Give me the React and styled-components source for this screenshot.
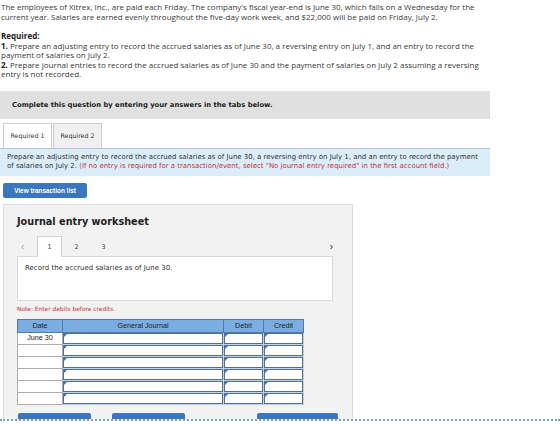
import React, { useState } from 'react';
import styled, { createGlobalStyle } from 'styled-components';

const GlobalStyle = createGlobalStyle`
  html, body {
    margin: 0;
    padding: 0;
    background: #fff;
  }
  body {
    font-family: 'Open Sans', 'Liberation Sans', sans-serif;
    color: #333;
    overflow: hidden;
  }
`;

const Page = styled.div`
  width: 560px;
  padding: 2px 0 0 1px;
  box-sizing: border-box;
`;

const Intro = styled.p`
  margin: 0;
  font-size: 8px;
  line-height: 10px;
  color: #3a3a3a;
  white-space: nowrap;
`;

const Required = styled.div`
  margin-top: 9px;
  font-size: 8px;
  line-height: 9.6px;
  color: #3a3a3a;
  white-space: nowrap;

  b {
    color: #222;
  }
`;

const Banner = styled.div`
  margin: 12px 0 0 -1px;
  width: 490px;
  height: 28px;
  background: #e0e0e0;
  display: flex;
  align-items: center;
  padding-left: 12px;
  box-sizing: border-box;
  font-family: 'DejaVu Sans', Verdana, sans-serif;
  font-weight: bold;
  font-size: 6.8px;
  color: #222;
`;

const TabRow = styled.div`
  display: flex;
  margin: 4px 0 0 2px;
  height: 25px;
`;

const Tab = styled.div`
  width: 49px;
  box-sizing: border-box;
  display: flex;
  align-items: center;
  justify-content: center;
  border: 1px solid #cfcfcf;
  border-bottom: none;
  background: ${(p) => (p.$active ? '#fff' : '#f0f0f0')};
  font-family: 'DejaVu Sans', Verdana, sans-serif;
  font-size: 6.3px;
  color: #333;
  & + & {
    margin-left: 1px;
  }
`;

const Info = styled.div`
  margin-left: -1px;
  width: 490px;
  height: 28px;
  box-sizing: border-box;
  background: #dcedfa;
  border-top: 1px solid #b8c4cf;
  padding: 4px 7px 0;
  font-family: 'DejaVu Sans', Verdana, sans-serif;
  font-size: 6.95px;
  line-height: 9px;
  color: #333;
  white-space: nowrap;

  span {
    color: #c4343a;
  }
`;

const BlueButton = styled.button`
  display: flex;
  flex-shrink: 0;
  align-items: center;
  justify-content: center;
  border: none;
  border-radius: 2px;
  background: #3b77bf;
  color: #fff;
  font-family: 'Liberation Sans', Arial, sans-serif;
  font-weight: bold;
  font-size: 6.4px;
  padding: 0;
  width: ${(p) => p.$w}px;
  height: ${(p) => p.$h || 16}px;
`;

const ListButton = styled(BlueButton)`
  margin: 7px 0 0 2px;
`;

const Worksheet = styled.div`
  margin: 6px 0 0 2px;
  width: 350px;
  height: 260px;
  box-sizing: border-box;
  background: #f2f2f2;
  border: 1px solid #dcdcdc;
  padding: 0 19px 0 13px;
`;

const Title = styled.h3`
  margin: 10px 0 0;
  font-family: 'DejaVu Sans', Verdana, sans-serif;
  font-size: 9.7px;
  line-height: 13px;
  color: #222;
`;

const Steps = styled.div`
  display: flex;
  align-items: stretch;
  height: 21px;
  margin-top: 7px;
`;

const Arrow = styled.div`
  width: 20px;
  display: flex;
  align-items: center;
  justify-content: ${(p) => (p.$right ? 'flex-end' : 'flex-start')};
  padding-left: ${(p) => (p.$right ? '0' : '4px')};
  box-sizing: border-box;
  margin-left: ${(p) => (p.$right ? 'auto' : '0')};
  color: ${(p) => (p.$muted ? '#aaa' : '#333')};
  font-size: 11px;
`;

const Step = styled.div`
  width: 25px;
  box-sizing: border-box;
  display: flex;
  align-items: center;
  justify-content: center;
  font-family: 'DejaVu Sans', Verdana, sans-serif;
  font-size: 6.4px;
  color: #444;
  background: ${(p) => (p.$active ? '#fff' : 'transparent')};
  border: 1px solid ${(p) => (p.$active ? '#d2d2d2' : 'transparent')};
  border-bottom: none;
  margin-right: 2px;
  position: relative;
  top: 1px;
`;

const Prompt = styled.div`
  height: 45px;
  box-sizing: border-box;
  background: #fff;
  border: 1px solid #d8d8d8;
  padding: 7px 7px;
  font-family: 'DejaVu Sans', Verdana, sans-serif;
  font-size: 7px;
  color: #333;
`;

const Note = styled.div`
  margin-top: 4px;
  font-family: 'DejaVu Sans', Verdana, sans-serif;
  font-size: 5.9px;
  line-height: 8px;
  color: #c4343a;
`;

const Table = styled.table`
  margin-top: 6px;
  width: 287px;
  table-layout: fixed;
  border-collapse: collapse;
  font-family: 'Liberation Sans', Arial, sans-serif;
  font-size: 7.2px;
  color: #222;

  tbody tr {
    height: 12px;
  }
  thead tr {
    height: 13px;
  }
`;

const Head = styled.th`
  padding: 0;
  background: #7aaee3;
  border: 1px solid #56779f;
  font-weight: normal;
  text-align: center;
  line-height: 11px;
`;

const DateCell = styled.td`
  padding: 0;
  background: #fff;
  border: 1px solid #acacac;
  text-align: center;
  line-height: 10px;
`;

const EntryCell = styled.td`
  padding: 0;
  border: 1px solid #c6d3e4;
`;

const Entry = styled.div`
  height: 9px;
  background: #fff;
  border: 1px solid #4f6f99;
  position: relative;

  &::before {
    content: '';
    position: absolute;
    left: 0;
    top: 0;
    border-top: 3px solid #3d74c4;
    border-right: 3px solid transparent;
  }
`;

const Actions = styled.div`
  display: flex;
  margin-top: 8px;
  margin-left: 1px;
`;

const ActionButton = styled(BlueButton)`
  margin-left: ${(p) => p.$gap}px;
  border-radius: 2px 2px 0 0;
`;

const Fold = styled.div`
  position: fixed;
  left: 0;
  right: 0;
  top: 419px;
  bottom: 0;
  background: #fff;
  border-top: 2px dotted #7f9dc6;
`;

const columns = [
  { label: 'Date', w: 45 },
  { label: 'General Journal', w: 161 },
  { label: 'Debit', w: 40 },
  { label: 'Credit', w: 40 },
];

const rows = ['June 30', '', '', '', '', ''];

export default function App() {
  const [tab, setTab] = useState(1);
  const [step, setStep] = useState(1);

  return (
    <>
      <GlobalStyle />
      <Page>
        <Intro>
          The employees of Xitrex, Inc., are paid each Friday. The company's fiscal year-end is June 30, which falls
          on a Wednesday for the
          <br />
          current year. Salaries are earned evenly throughout the five-day work week, and $22,000 will be paid on
          Friday, July 2.
        </Intro>
        <Required>
          <b>Required:</b>
          <br />
          <b>1.</b> Prepare an adjusting entry to record the accrued salaries as of June 30, a reversing entry on July
          1, and an entry to record the
          <br />
          payment of salaries on July 2.
          <br />
          <b>2.</b> Prepare journal entries to record the accrued salaries as of June 30 and the payment of salaries
          on July 2 assuming a reversing
          <br />
          entry is not recorded.
        </Required>

        <Banner>Complete this question by entering your answers in the tabs below.</Banner>

        <TabRow>
          {[1, 2].map((n) => (
            <Tab key={n} $active={tab === n} onClick={() => setTab(n)}>
              Required {n}
            </Tab>
          ))}
        </TabRow>
        <Info>
          Prepare an adjusting entry to record the accrued salaries as of June 30, a reversing entry on July 1, and
          an entry to record the payment
          <br />
          of salaries on July 2.{' '}
          <span>
            (If no entry is required for a transaction/event, select "No journal entry required" in the first account
            field.)
          </span>
        </Info>

        <ListButton $w={84} $h={15}>View transaction list</ListButton>

        <Worksheet>
          <Title>Journal entry worksheet</Title>
          <Steps>
            <Arrow $muted>&#x2039;</Arrow>
            {[1, 2, 3].map((n) => (
              <Step key={n} $active={step === n} onClick={() => setStep(n)}>
                {n}
              </Step>
            ))}
            <Arrow $right>&#x203A;</Arrow>
          </Steps>
          <Prompt>Record the accrued salaries as of June 30.</Prompt>
          <Note>Note: Enter debits before credits.</Note>
          <Table>
            <colgroup>
              {columns.map((c) => (
                <col key={c.label} style={{ width: c.w }} />
              ))}
            </colgroup>
            <thead>
              <tr>
                {columns.map((c) => (
                  <Head key={c.label}>{c.label}</Head>
                ))}
              </tr>
            </thead>
            <tbody>
              {rows.map((d, i) => (
                <tr key={i}>
                  <DateCell>{d}</DateCell>
                  {[0, 1, 2].map((k) => (
                    <EntryCell key={k}>
                      <Entry />
                    </EntryCell>
                  ))}
                </tr>
              ))}
            </tbody>
          </Table>
          <Actions>
            <ActionButton $w={73} $h={24} $gap={0}>Record entry</ActionButton>
            <ActionButton $w={73} $h={24} $gap={21}>Clear entry</ActionButton>
            <ActionButton $w={81} $h={24} $gap={72}>View general journal</ActionButton>
          </Actions>
        </Worksheet>
      </Page>
      <Fold />
    </>
  );
}
